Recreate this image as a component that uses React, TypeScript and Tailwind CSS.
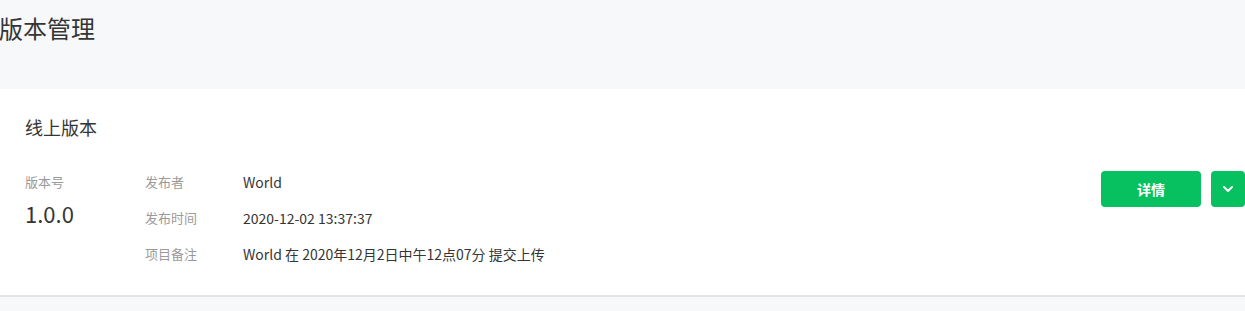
import React from "react";

const font = { fontFamily: '"Noto Sans CJK SC", "Noto Sans", sans-serif' };

const Row = ({ label, value }: { label: string; value: string }) => (
  <div className="flex leading-[22px]">
    <div className="w-[98px] text-[13px] text-[#9a9a9a]">{label}</div>
    <div className="text-[14px] text-[#353535]">{value}</div>
  </div>
);

export default function App() {
  return (
    <div className="min-h-[311px] w-full bg-[#f7f8fa]" style={font}>
      <div className="h-[89px] -ml-[1px] pt-[12px] text-[24px] leading-[32px] text-[#353535]">
        版本管理
      </div>
      <div className="bg-white border-b-2 border-[#e4e4e4] pl-[25px] pt-[26px] pb-[30px]">
        <div className="text-[18px] leading-[24px] text-[#353535]">线上版本</div>
        <div className="mt-[32px] flex items-start">
          <div className="w-[120px]">
            <div className="text-[13px] leading-[22px] text-[#9a9a9a]">版本号</div>
            <div className="mt-[5px] text-[22px] leading-[30px] text-[#353535]">1.0.0</div>
          </div>
          <div className="flex flex-col gap-[14px]">
            <Row label="发布者" value="World" />
            <Row label="发布时间" value="2020-12-02 13:37:37" />
            <Row label="项目备注" value="World 在 2020年12月2日中午12点07分 提交上传" />
          </div>
          <div className="ml-auto flex gap-[10px]">
            <button className="h-[36px] w-[100px] rounded-[4px] bg-[#07c160] text-[14px] font-bold text-white">
              详情
            </button>
            <button className="flex h-[36px] w-[34px] items-center justify-center rounded-[4px] bg-[#07c160]">
              <svg width="12" height="8" viewBox="0 0 12 8" fill="none">
                <path d="M2 2l4 4 4-4" stroke="white" strokeWidth="2" strokeLinecap="round" strokeLinejoin="round" />
              </svg>
            </button>
          </div>
        </div>
      </div>
    </div>
  );
}
